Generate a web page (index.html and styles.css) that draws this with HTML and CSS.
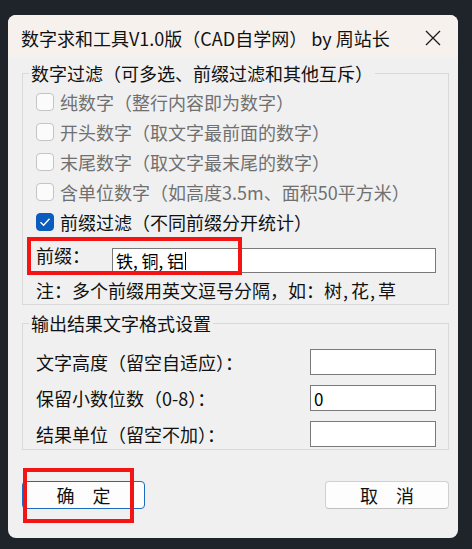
FILE: index.html
```html
<!DOCTYPE html>
<html lang="zh">
<head>
<meta charset="utf-8">
<title>数字求和工具</title>
<link rel="stylesheet" href="styles.css">
</head>
<body>
<div class="dialog">
  <div class="titlebar">
    <span class="title">数字求和工具V1.0版（CAD自学网） by 周站长</span>
    <svg class="close" width="16" height="16" viewBox="0 0 16 16"><path d="M1 1 L15 15 M15 1 L1 15" stroke="#1a1a1a" stroke-width="1.3" fill="none"/></svg>
  </div>
  <div class="content">
    <fieldset class="group">
      <legend>数字过滤（可多选、前缀过滤和其他互斥）</legend>
      <div class="group-body g1">
        <div class="check-row disabled"><span class="box"></span><span>纯数字（整行内容即为数字）</span></div>
        <div class="check-row disabled"><span class="box"></span><span>开头数字（取文字最前面的数字）</span></div>
        <div class="check-row disabled"><span class="box"></span><span>末尾数字（取文字最末尾的数字）</span></div>
        <div class="check-row disabled"><span class="box"></span><span>含单位数字（如高度3.5m、面积50平方米）</span></div>
        <div class="check-row"><span class="box checked"><svg width="12" height="10" viewBox="0 0 12 10"><path d="M1.5 5.2 L4.6 8.2 L10.5 1.8" stroke="#fff" stroke-width="1.4" fill="none"/></svg></span><span>前缀过滤（不同前缀分开统计）</span></div>
        <div class="prefix-row">
          <span class="prefix-label">前缀：</span>
          <div class="text-input wide"><span class="val">铁, 铜, 铝</span><span class="caret"></span></div>
        </div>
        <div class="note">注：多个前缀用英文逗号分隔，如：树<span class="sep">,</span>花<span class="sep">,</span>草</div>
      </div>
    </fieldset>
    <fieldset class="group g2wrap">
      <legend>输出结果文字格式设置</legend>
      <div class="group-body g2">
        <div class="field-row"><span>文字高度（留空自适应）：</span><div class="text-input small"></div></div>
        <div class="field-row"><span>保留小数位数（0-8）：</span><div class="text-input small"><span class="val">0</span></div></div>
        <div class="field-row"><span>结果单位（留空不加）：</span><div class="text-input small"></div></div>
      </div>
    </fieldset>
    <div class="buttons">
      <button class="btn primary">确　定</button>
      <button class="btn">取　消</button>
    </div>
  </div>
  <div class="mark mark-prefix"></div>
  <div class="mark mark-ok"></div>
</div>
</body>
</html>
```
FILE: styles.css
```css
html, body {
  margin: 0;
  padding: 0;
}
body {
  background: #1f232a;
  height: 549px;
  overflow: hidden;
  font-family: "Noto Sans CJK SC", "Noto Sans", sans-serif;
  color: #111;
}
.dialog {
  position: relative;
  width: 450px;
  height: 523px;
  margin: 15px 0 0 8px;
  border-radius: 8px;
  background: #f0f0f0;
  overflow: hidden;
  display: flex;
  flex-direction: column;
}
.titlebar {
  height: 43px;
  flex: none;
  background: #f7f1ee;
  display: flex;
  align-items: center;
  justify-content: space-between;
  padding: 3px 17px 0 13px;
  box-sizing: border-box;
}
.title {
  font-size: 18px;
  line-height: 24px;
  color: #111;
  white-space: nowrap;
}
.close {
  display: block;
}
.content {
  padding: 3px 9px 0 14px;
  font-size: 18px;
}
.group {
  margin: 0;
  padding: 0;
  border: 1px solid #d9d9d9;
  min-width: 0;
}
.group legend {
  margin-left: 6px;
  padding: 0 2px;
  font-size: 18px;
  line-height: 24px;
  color: #111;
}
.group-body {
  padding: 2px 12px 2px 13px;
}
.check-row {
  height: 30px;
  display: flex;
  align-items: center;
  gap: 6px;
  line-height: 20px;
  white-space: nowrap;
}
.check-row.disabled {
  color: #707070;
}
.box {
  width: 16px;
  height: 16px;
  border: 1px solid #c4c4c4;
  border-radius: 4px;
  background: #fbfbfb;
  flex: none;
  display: flex;
  align-items: center;
  justify-content: center;
}
.box.checked {
  background: #0b5cbf;
  border-color: #0b5cbf;
}
.prefix-row {
  display: flex;
  align-items: flex-start;
  margin-top: 11px;
}
.prefix-label {
  width: 76px;
  flex: none;
  line-height: 14px;
  height: 25px;
}
.text-input {
  box-sizing: border-box;
  background: #fff;
  border: 1px solid #7a7a7a;
  display: flex;
  align-items: center;
  padding-left: 3px;
  font-size: 17px;
  color: #000;
}
.text-input.wide {
  width: 325px;
  height: 25px;
}
.text-input.small {
  width: 126px;
  height: 26px;
}
.caret {
  width: 1px;
  height: 18px;
  background: #000;
  margin-left: 1px;
}
.note {
  margin-top: 5px;
  line-height: 24px;
  white-space: nowrap;
}
.sep {
  display: inline-block;
  width: 9px;
  padding-left: 1px;
  box-sizing: border-box;
}
.g2wrap {
  margin-top: 6px;
}
.g2 {
  padding-top: 14px;
  display: flex;
  flex-direction: column;
  gap: 10px;
}
.field-row {
  display: flex;
  align-items: center;
  justify-content: space-between;
  height: 26px;
}
.buttons {
  display: flex;
  justify-content: space-between;
  margin-top: 31px;
}
.btn {
  height: 28px;
  width: 124px;
  box-sizing: border-box;
  border: 1px solid #d0d0d0;
  border-bottom-color: #c0c0c0;
  border-radius: 4px;
  background: #fdfdfd;
  font-family: "Noto Sans CJK SC", sans-serif;
  font-size: 18px;
  color: #111;
  padding: 0;
  line-height: 24px;
}
.btn.primary {
  width: 123px;
  border-color: #1b6bc0;
}
.mark {
  position: absolute;
  border: 4px solid #f41414;
  box-sizing: border-box;
}
.mark-prefix {
  left: 19px;
  top: 222px;
  width: 215px;
  height: 38px;
}
.mark-ok {
  left: 15px;
  top: 453px;
  width: 111px;
  height: 55px;
}
```
